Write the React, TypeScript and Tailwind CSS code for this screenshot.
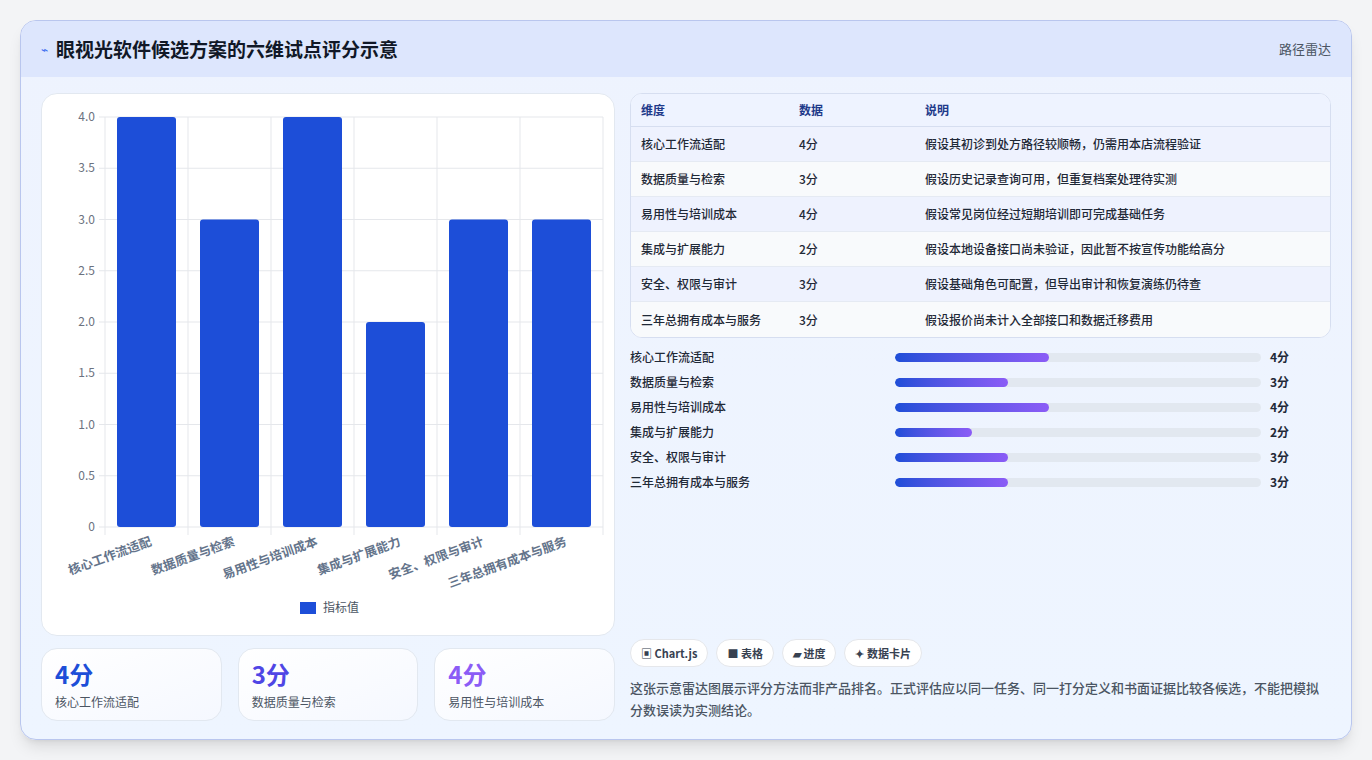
import React from "react";

const dims = [
  { n: "核心工作流适配", v: 4, d: "假设其初诊到处方路径较顺畅，仍需用本店流程验证" },
  { n: "数据质量与检索", v: 3, d: "假设历史记录查询可用，但重复档案处理待实测" },
  { n: "易用性与培训成本", v: 4, d: "假设常见岗位经过短期培训即可完成基础任务" },
  { n: "集成与扩展能力", v: 2, d: "假设本地设备接口尚未验证，因此暂不按宣传功能给高分" },
  { n: "安全、权限与审计", v: 3, d: "假设基础角色可配置，但导出审计和恢复演练仍待查" },
  { n: "三年总拥有成本与服务", v: 3, d: "假设报价尚未计入全部接口和数据迁移费用" },
];
const pct: Record<number, number> = { 4: 42, 3: 31, 2: 21 };
const font = { fontFamily: '"Noto Sans CJK SC", "Noto Sans", sans-serif' };

function Chart() {
  const left = 63, right = 561, top = 23, bottom = 433;
  const unit = (bottom - top) / 4;
  const cw = (right - left) / 6;
  const ticks = [0, 0.5, 1, 1.5, 2, 2.5, 3, 3.5, 4];
  return (
    <svg width="574" height="543" style={font}>
      {ticks.map((t) => {
        const y = bottom - t * unit;
        return (
          <g key={t}>
            <line x1={left - 6} x2={right} y1={y} y2={y} stroke="#e5e7eb" />
            <text x={left - 10} y={y + 4} fontSize="12" fill="#6b7280" textAnchor="end">
              {t === 0 ? "0" : t.toFixed(1)}
            </text>
          </g>
        );
      })}
      {Array.from({ length: 7 }).map((_, i) => (
        <line key={i} x1={left + i * cw} x2={left + i * cw} y1={top} y2={bottom + 8} stroke="#e5e7eb" />
      ))}
      {dims.map((d, i) => {
        const x = left + i * cw + 12;
        const h = d.v * unit;
        return <rect key={i} x={x} y={bottom - h} width={59} height={h} rx={3} fill="#1d4ed8" />;
      })}
      {dims.map((d, i) => {
        const cx = left + i * cw + cw / 2 + 6;
        return (
          <text key={i} x={cx} y={bottom + 18} fontSize="12.5" fontWeight="600" fill="#64748b" textAnchor="end" transform={`rotate(-20 ${cx} ${bottom + 18})`}>
            {d.n}
          </text>
        );
      })}
      <rect x="258" y="508" width="16" height="12" fill="#1d4ed8" />
      <text x="281" y="518" fontSize="12" fill="#4b5563">指标值</text>
    </svg>
  );
}

export default function App() {
  return (
    <div className="w-[1372px] h-[760px] bg-[#f3f4f6] pt-5 px-5" style={font}>
      <div className="h-[720px] rounded-2xl border border-[#b9c6ee] overflow-hidden bg-gradient-to-b from-[#eef3fe] to-[#eef5ff] shadow-lg flex flex-col">
        <div className="h-[56px] bg-[#dde6fd] flex items-center justify-between px-5 shrink-0">
          <div className="flex items-center gap-2">
            <span className="text-[#3b6cf0] text-[12px]">⌁</span>
            <span className="text-[19px] font-bold text-[#111827]">眼视光软件候选方案的六维试点评分示意</span>
          </div>
          <span className="text-[13px] text-[#4b5563]">路径雷达</span>
        </div>
        <div className="flex gap-[15px] px-5 pt-4 pb-5 flex-1">
          <div className="w-[574px] flex flex-col gap-3">
            <div className="h-[543px] bg-white rounded-2xl border border-[#e2e8f0]">
              <Chart />
            </div>
            <div className="grid grid-cols-3 gap-4 h-[73px]">
              {[["4分", "text-[#1d4ed8]"], ["3分", "text-[#4f46e5]"], ["4分", "text-[#8b5cf6]"]].map(([v, c], i) => (
                <div key={i} className="rounded-2xl border border-[#e2e8f0] bg-gradient-to-br from-white to-[#f5f8ff] px-[13px] pt-[10px]">
                  <div className={`text-[24px] font-bold leading-[30px] ${c}`}>{v}</div>
                  <div className="text-[12px] text-[#4b5563] mt-1">{dims[i].n}</div>
                </div>
              ))}
            </div>
          </div>
          <div className="w-[704px] flex flex-col">
            <div className="rounded-xl border border-[#d6def0] overflow-hidden bg-white text-[12px] text-[#1f2937]">
              <div className="flex h-[33px] items-center bg-[#eef3ff] font-semibold text-[#1e3a8a] border-b border-[#d6def0]">
                <div className="w-[168px] pl-[10px]">维度</div>
                <div className="w-[126px]">数据</div>
                <div>说明</div>
              </div>
              {dims.map((d, i) => (
                <div key={i} className={`flex h-[35px] items-center font-medium border-b border-[#e5eaf3] last:border-b-0 ${i % 2 === 0 ? "bg-[#eef2fe]" : "bg-[#f8fafc]"}`}>
                  <div className="w-[168px] pl-[10px]">{d.n}</div>
                  <div className="w-[126px]">{d.v}分</div>
                  <div>{d.d}</div>
                </div>
              ))}
            </div>
            <div className="flex flex-col gap-[7px] mt-[10px]">
              {dims.map((d, i) => (
                <div key={i} className="flex items-center h-[18px] text-[12px] font-medium text-[#1f2937]">
                  <div className="w-[265px]">{d.n}</div>
                  <div className="w-[366px] h-[9px] rounded-full bg-[#e2e8f0] overflow-hidden">
                    <div className="h-full rounded-full bg-gradient-to-r from-[#1d4ed8] to-[#8b5cf6]" style={{ width: `${pct[d.v]}%` }} />
                  </div>
                  <div className="ml-[9px] font-semibold">{d.v}分</div>
                </div>
              ))}
            </div>
            <div className="flex-1" />
            <div className="flex gap-2 text-[11px] font-semibold text-[#374151]">
              {["▣ Chart.js", "■ 表格", "▰ 进度", "✦ 数据卡片"].map((c) => (
                <div key={c} className="h-[28px] px-[10px] flex items-center rounded-full bg-white border border-[#e5e7eb]">{c}</div>
              ))}
            </div>
            <p className="mt-[10px] text-[13px] leading-[22px] text-[#4b5563] font-medium">
              这张示意雷达图展示评分方法而非产品排名。正式评估应以同一任务、同一打分定义和书面证据比较各候选，不能把模拟分数误读为实测结论。
            </p>
          </div>
        </div>
      </div>
    </div>
  );
}
